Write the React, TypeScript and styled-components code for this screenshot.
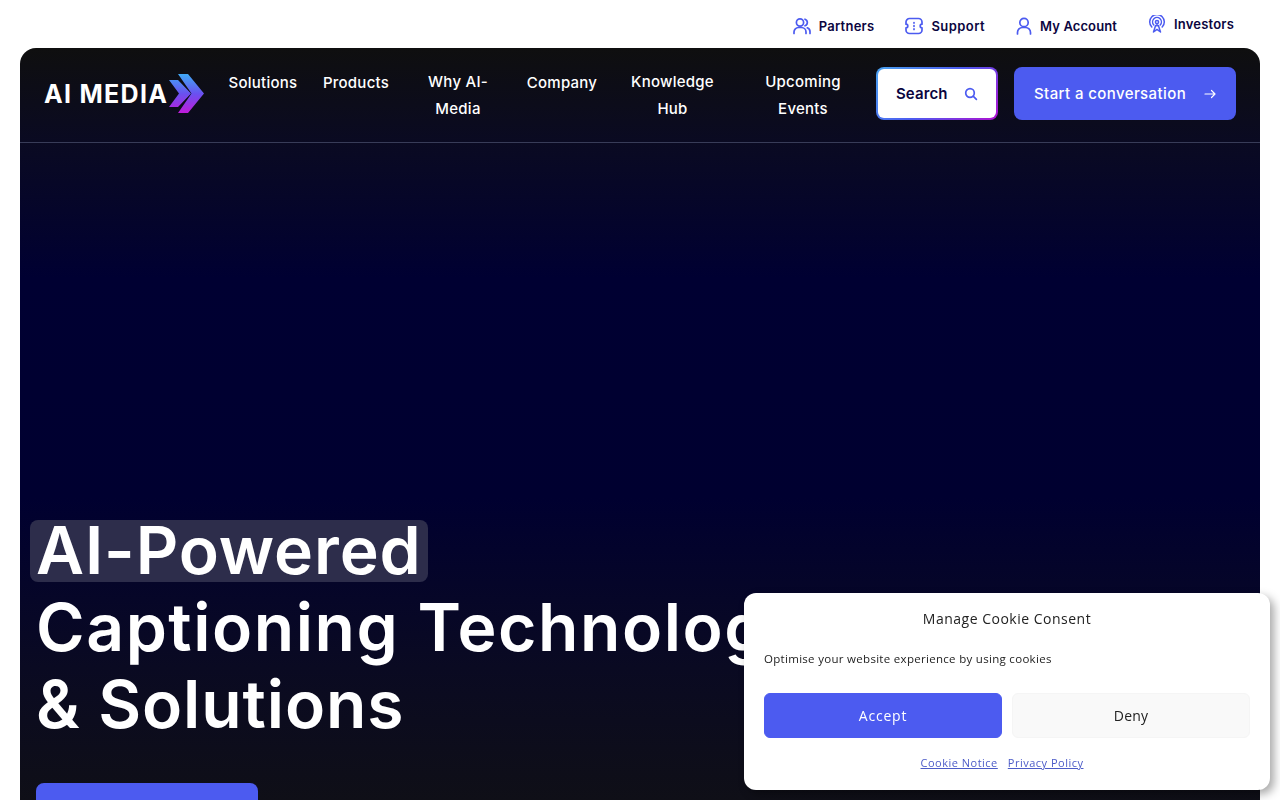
import React from "react";
import styled, { createGlobalStyle } from "styled-components";

const Global = createGlobalStyle`
  html, body { margin: 0; padding: 0; background: #fff; overflow: hidden; height: 800px; }
  * { box-sizing: border-box; }
  body { font-family: Inter, "Liberation Sans", sans-serif; }
`;
const Page = styled.div`height: 800px; overflow: hidden; display: flex; flex-direction: column;`;
const TopBar = styled.div`
  height: 48px; flex: none; display: flex; justify-content: flex-end; align-items: center;
  gap: 31px; padding: 3px 46px 0 0;
`;
const TopLink = styled.a<{ $up?: boolean; $ls?: number }>`
  display: flex; align-items: center; gap: 8px; color: #0b0540;
  font-size: 13px; font-weight: 600; letter-spacing: ${p => p.$ls ?? 0.1}px; white-space: nowrap;
  margin-top: ${p => (p.$up ? "-4px" : "0")};
  svg { color: #4c5bf0; flex: none; }
`;
const Panel = styled.div`
  margin: 0 20px; height: 800px; flex: none; border-radius: 16px 16px 0 0; overflow: hidden;
  background: linear-gradient(180deg, #0f0f0f 0, #0a0a22 94px, #000032 230px, #000030 450px, #0a0a22 620px, #0f0f17 752px);
  display: flex; flex-direction: column;
`;
const Nav = styled.nav`
  height: 95px; flex: none; display: flex; align-items: flex-start; padding: 19px 24px 0;
  border-bottom: 1px solid #383c58;
`;
const LogoWrap = styled.a`display: flex; align-items: center; width: 172px; height: 53px; flex: none;`;
const LogoText = styled.span`
  color: #fff; font-size: 25px; font-weight: 700; letter-spacing: 1.3px; white-space: nowrap;
`;
const NavList = styled.div`display: flex; align-items: flex-start; flex: none; margin-top: 1px;`;
const NavItem = styled.a<{ $w: number; $single?: boolean }>`
  width: ${p => p.$w}px; text-align: center; color: #fff; font-size: 15px; font-weight: 500;
  line-height: 27px; letter-spacing: 0.25px; flex: none;
  margin-top: ${p => (p.$single ? "1px" : "0")};
`;
const SearchBtn = styled.button`
  width: 122px; height: 53px; margin-left: 5px; flex: none; border: 2px solid transparent; border-radius: 8px; padding: 0 18px;
  background: linear-gradient(#fff, #fff) padding-box, linear-gradient(135deg, #4aa3f0, #4c5bf0 50%, #b010d0) border-box;
  display: flex; align-items: center; justify-content: space-between; font: inherit;
  color: #0b0540; font-size: 15px; font-weight: 600; letter-spacing: 0.1px;
  svg { color: #4c5bf0; }
`;
const Cta = styled.button<{ $w: number }>`
  width: ${p => p.$w}px; height: 53px; border: 0; border-radius: 8px; background: #4c5bf0; color: #fff;
  font: inherit; font-size: 15px; font-weight: 500; letter-spacing: 0.4px; flex: none;
  display: flex; align-items: center; justify-content: space-between; padding: 0 20px;
`;
const NavCta = styled(Cta)`margin-left: 16px;`;
const Hero = styled.section`flex: 1; padding: 369px 16px 0; display: flex; flex-direction: column; align-items: flex-start;`;
const Title = styled.h1`
  margin: 0 0 40px; color: #fff; font-size: 66px; line-height: 77px; font-weight: 600; white-space: nowrap;
`;
const TitleLine = styled.span<{ $ls: number }>`letter-spacing: ${p => p.$ls}px;`;
const Highlight = styled.span`
  background: #2d2d4b; border-radius: 8px; margin-left: -6px; padding: 0 6px; display: inline-block; height: 62px; line-height: 60px;
  letter-spacing: 0.9px;
`;
const Cookie = styled.div`
  position: fixed; left: 744px; top: 593px; width: 526px; height: 197px; background: #fff; border-radius: 12px;
  box-shadow: 4px 4px 10px rgba(0,0,0,.35); padding: 17px 20px 0; color: #222; font-family: "Open Sans", sans-serif;
  display: flex; flex-direction: column;
`;
const CookieTitle = styled.div`text-align: center; font-size: 14px; line-height: 18px; font-weight: 500; letter-spacing: 0.5px;`;
const CookieText = styled.p`margin: 23px 0 0; font-size: 11.5px; line-height: 16px; letter-spacing: 0.3px;`;
const CookieRow = styled.div`display: grid; grid-template-columns: 1fr 1fr; gap: 10px; margin-top: 26px;`;
const CookieBtn = styled.button<{ $primary?: boolean }>`
  height: 45px; border-radius: 6px; border: 1px solid ${p => (p.$primary ? "#4c5bf0" : "#f5f5f5")};
  background: ${p => (p.$primary ? "#4c5bf0" : "#f9f9f9")}; color: ${p => (p.$primary ? "#fff" : "#222")};
  font: inherit; font-size: 14px; font-weight: 500; letter-spacing: ${p => (p.$primary ? 0.8 : 0.2)}px;
`;
const CookieLinks = styled.div`display: flex; justify-content: center; gap: 10px; margin-top: 17px; padding-right: 10px;`;
const CookieLink = styled.a`font-size: 11px; line-height: 16px; color: #4c5bc8; text-decoration: underline; letter-spacing: 0.5px;`;

const Partners = () => (
  <svg width="18" height="18" viewBox="0 0 18 18" fill="none" stroke="currentColor" strokeWidth="1.7" strokeLinecap="round">
    <circle cx="7" cy="5.5" r="3.6" /><path d="M1 16.500v-1.500a4.500 4.500 0 0 1 4.500-4.500h3A4.500 4.500 0 0 1 13 15v1.500" />
    <path d="M12 2.200a3.500 3.500 0 0 1 0 6.600M14.300 10.800A4.200 4.200 0 0 1 17 15v1.500" />
  </svg>
);
const Support = () => (
  <svg width="18" height="18" viewBox="0 0 18 18" fill="none" stroke="currentColor" strokeWidth="1.7" strokeLinecap="round" strokeLinejoin="round">
    <path d="M4.500 1.500h9a3.500 3.500 0 0 1 3.500 3.500v2.200a1.800 1.800 0 0 0 0 3.600V13a3.500 3.500 0 0 1-3.500 3.500h-9A3.500 3.500 0 0 1 1 13v-2.200a1.800 1.800 0 0 0 0-3.600V5a3.500 3.500 0 0 1 3.500-3.500z" />
    <path d="M9 5.500v.6M9 8.700v.6M9 11.900v.6" />
  </svg>
);
const Account = () => (
  <svg width="16" height="18" viewBox="0 0 16 18" fill="none" stroke="currentColor" strokeWidth="1.7" strokeLinecap="round">
    <circle cx="8" cy="5.500" r="4.200" /><path d="M1.500 17v-1.500a5 5 0 0 1 5-5h3a5 5 0 0 1 5 5V17" />
  </svg>
);
const Tower = () => (
  <svg width="18" height="18" viewBox="0 0 18 18" fill="none" stroke="currentColor" strokeWidth="1.5" strokeLinecap="round" strokeLinejoin="round">
    <circle cx="9" cy="7" r="1.600" />
    <path d="M5.800 10a4.400 4.400 0 1 1 6.400 0M3.800 12a7.300 7.300 0 1 1 10.400 0" />
    <path d="M9 9v2M7.600 10.500 5.500 17l3.500-2.600L12.500 17l-2.100-6.500" />
  </svg>
);
const SearchIcon = () => (
  <svg width="14" height="14" viewBox="0 0 14 14" fill="none" stroke="currentColor" strokeWidth="1.7" strokeLinecap="round">
    <circle cx="6" cy="6" r="4.300" /><path d="m9.400 9.400 3 3" />
  </svg>
);
const Arrow = () => (
  <svg width="12" height="10" viewBox="0 0 12 10" fill="none" stroke="currentColor" strokeWidth="1.2" strokeLinecap="round" strokeLinejoin="round">
    <path d="M1 5h10M7.500 1.500 11 5 7.500 8.500" />
  </svg>
);
const Chevrons = () => (
  <svg width="36" height="40" viewBox="0 0 36 40" style={{ flex: "none" }}>
    <defs>
      <linearGradient id="lg" gradientUnits="userSpaceOnUse" x1="0" y1="0" x2="0" y2="40">
        <stop offset="0" stopColor="#3fa9f5" />
        <stop offset="0.5" stopColor="#6a50f0" />
        <stop offset="1" stopColor="#c418d8" />
      </linearGradient>
    </defs>
    <path fill="url(#lg)" d="M1 6h9l13 13.500L10 33H1l10-13.500z" />
    <path fill="url(#lg)" d="M10 0h10l16 19.500L20 39H10l13.500-19.500z" />
  </svg>
);

const navItems: { label: React.ReactNode; w: number; single?: boolean }[] = [
  { label: "Solutions", w: 94, single: true },
  { label: "Products", w: 92, single: true },
  { label: <>Why AI-<br />Media</>, w: 112 },
  { label: "Company", w: 96, single: true },
  { label: <>Knowledge<br />Hub</>, w: 125 },
  { label: <>Upcoming<br />Events</>, w: 136 },
];

export default function App() {
  return (
    <Page>
      <Global />
      <TopBar>
        <TopLink $ls={0.25}><Partners />Partners</TopLink>
        <TopLink $ls={0.45}><Support />Support</TopLink>
        <TopLink><Account />My Account</TopLink>
        <TopLink $up $ls={0.2}><Tower />Investors</TopLink>
      </TopBar>
      <Panel>
        <Nav>
          <LogoWrap><LogoText>AI MEDIA</LogoText><Chevrons /></LogoWrap>
          <NavList>
            {navItems.map((n, i) => <NavItem key={i} $w={n.w} $single={n.single}>{n.label}</NavItem>)}
          </NavList>
          <SearchBtn>Search<SearchIcon /></SearchBtn>
          <NavCta $w={222}>Start a conversation<Arrow /></NavCta>
        </Nav>
        <Hero>
          <Title>
            <Highlight>AI-Powered</Highlight><br />
            <TitleLine $ls={1.55}>Captioning Technology</TitleLine><br />
            <TitleLine $ls={0.9}>&amp; Solutions</TitleLine>
          </Title>
          <Cta $w={222} aria-label="Get started" />
        </Hero>
      </Panel>
      <Cookie>
        <CookieTitle>Manage Cookie Consent</CookieTitle>
        <CookieText>Optimise your website experience by using cookies</CookieText>
        <CookieRow>
          <CookieBtn $primary>Accept</CookieBtn>
          <CookieBtn>Deny</CookieBtn>
        </CookieRow>
        <CookieLinks>
          <CookieLink>Cookie Notice</CookieLink>
          <CookieLink>Privacy Policy</CookieLink>
        </CookieLinks>
      </Cookie>
    </Page>
  );
}
